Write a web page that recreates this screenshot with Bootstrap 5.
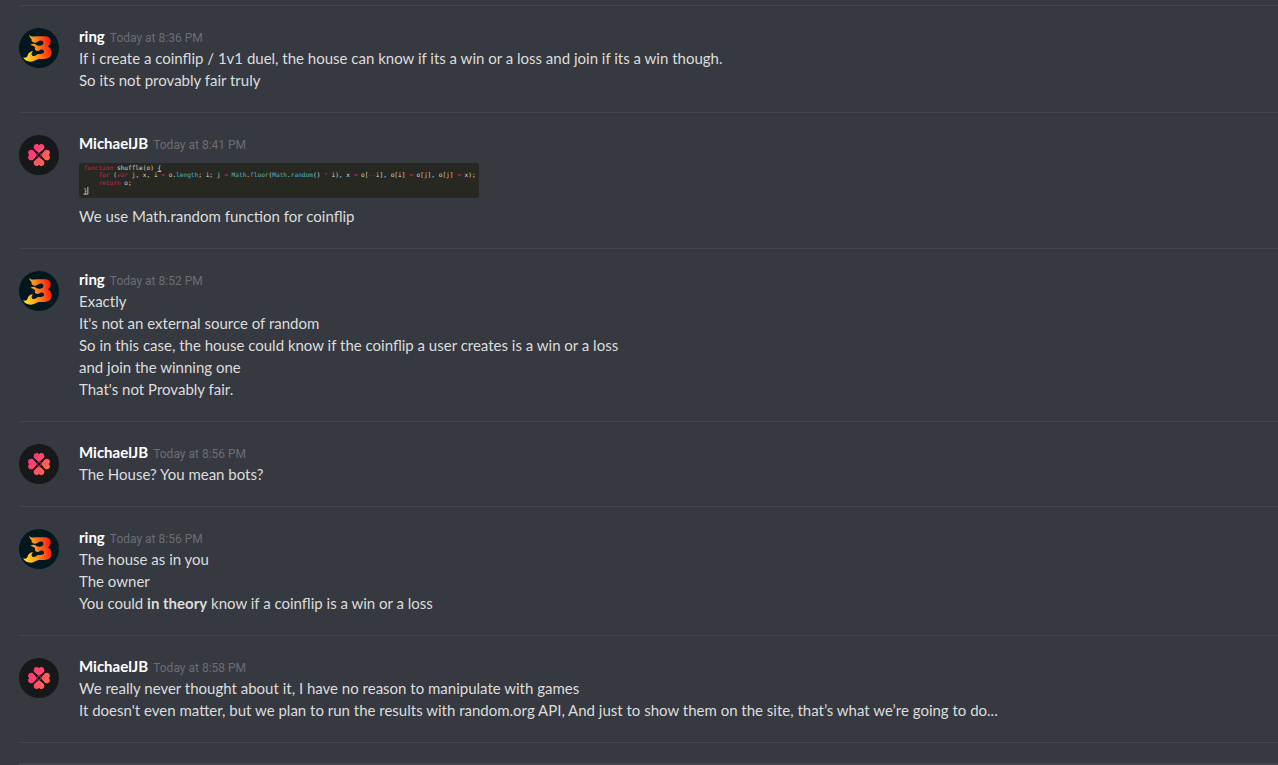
<!DOCTYPE html>
<html lang="en">
<head>
<meta charset="utf-8">
<meta name="viewport" content="width=device-width, initial-scale=1">
<title>Chat</title>
<link href="https://cdn.jsdelivr.net/npm/bootstrap@5.3.0/dist/css/bootstrap.min.css" rel="stylesheet">
<style>
  body { background: #36393f; color: #dcddde; font-family: Lato, "Open Sans", sans-serif; font-size: 15px; line-height: 22px; }
  .chat-log { padding: 5px 0 0 19px; }
  .message { padding: 19px 0 21px; gap: 20px; border-top: 1px solid #42454b; }
  .avatar { width: 40px; height: 40px; margin-top: 3px; }
  .byline { gap: 5px; }
  .author { font-size: 15px; line-height: 22px; font-weight: 700; color: #fff; }
  .stamp { font-family: Roboto, sans-serif; font-size: 12px; line-height: 16px; color: #6b6e74; }
  .attachment { width: 400px; height: 35px; margin: 9px 0 7px; border-radius: 3px; background: #272822; }
  .attachment text { font-family: "DejaVu Sans Mono", monospace; font-size: 16px; white-space: pre; fill: #d8d8c8; }
  .attachment .kw { fill: #c22a5c; }
  .attachment .fn { fill: #55b4c4; }
  .composer { margin-left: 19px; padding-top: 20px; border-top: 1px solid #42454b; }
  .composer-line { height: 2px; background: #43464c; }
</style>
</head>
<body>
<svg width="0" height="0" class="position-absolute" aria-hidden="true">
  <defs>
    <linearGradient id="fire" gradientUnits="userSpaceOnUse" x1="14" y1="70" x2="98" y2="52">
      <stop offset="0" stop-color="#ffe51f"/><stop offset=".4" stop-color="#ff9a1c"/><stop offset=".75" stop-color="#ff4a14"/><stop offset="1" stop-color="#f5180c"/>
    </linearGradient>
    <linearGradient id="petal" gradientUnits="userSpaceOnUse" x1="30" y1="45" x2="90" y2="85">
      <stop offset="0" stop-color="#ff2f83"/><stop offset="1" stop-color="#ff7245"/>
    </linearGradient>
    <symbol id="flame" viewBox="0 0 120 120">
      <circle cx="60" cy="60" r="60" fill="#03171f"/>
      <path fill="url(#fire)" d="M31 20C35 27 43 26 52 25H80C91 26 97 34 95 43C94 49 91 52 87 55C94 59 99 66 98 76C97 87 88 93 76 93H62C53 93 47 101 35 101C25 101 16 96 12 88C20 91 25 88 26 82C27 75 34 70 42 69C36 77 37 84 44 84C51 84 53 78 59 78H66C73 77 76 74 75 70C74 65 68 63 63 66C59 69 54 70 50 67C47 65 47 62 49 60C47 55 41 52 34 51C41 46 48 47 52 51C57 55 68 54 72 49C76 42 70 37 62 38C56 40 53 45 46 44C39 43 36 38 38 34C36 30 30 27 31 20Z"/>
    </symbol>
    <symbol id="clover" viewBox="0 0 120 120">
      <circle cx="60" cy="60" r="60" fill="#17181a"/>
      <g fill="url(#petal)">
        <path d="M60 54C54 49 44 45 44 37C44 27 55 24 60 31C65 24 76 27 76 37C76 45 66 49 60 54Z"/>
        <path d="M60 66C54 71 44 75 44 83C44 93 55 96 60 89C65 96 76 93 76 83C76 75 66 71 60 66Z"/>
        <path d="M54 60C49 54 45 44 37 44C27 44 24 55 31 60C24 65 27 76 37 76C45 76 49 66 54 60Z"/>
        <path d="M66 60C71 54 75 44 83 44C93 44 96 55 89 60C96 65 93 76 83 76C75 76 71 66 66 60Z"/>
      </g>
      <path d="M45 45L75 75M75 45L45 75" stroke="#17181a" stroke-width="5"/>
      <circle cx="60" cy="60" r="6" fill="#17181a" stroke="#b93858" stroke-width="2"/>
    </symbol>
  </defs>
</svg>

<main class="chat-log">
  <article class="message d-flex">
    <svg class="avatar flex-shrink-0" role="img" aria-label="ring"><use href="#flame"/></svg>
    <div>
      <div class="byline d-flex align-items-baseline"><h2 class="author mb-0">ring</h2><time class="stamp">Today at 8:36 PM</time></div>
      <div>If i create a coinflip / 1v1 duel, the house can know if its a win or a loss and join if its a win though.</div>
      <div>So its not provably fair truly</div>
    </div>
  </article>

  <article class="message d-flex">
    <svg class="avatar flex-shrink-0" role="img" aria-label="MichaelJB"><use href="#clover"/></svg>
    <div>
      <div class="byline d-flex align-items-baseline"><h2 class="author mb-0">MichaelJB</h2><time class="stamp">Today at 8:41 PM</time></div>
      <svg class="attachment d-block" viewBox="0 0 1036 91">
        <text x="10" y="18"><tspan class="kw" font-style="italic">function</tspan> shuffle(o) {</text>
        <text x="10" y="37">    <tspan class="kw">for</tspan> (<tspan class="kw" font-style="italic">var</tspan> j, x, i <tspan class="kw">=</tspan> o.<tspan class="fn">length</tspan>; i; j <tspan class="kw">=</tspan> <tspan class="fn">Math</tspan>.<tspan class="fn">floor</tspan>(<tspan class="fn">Math</tspan>.<tspan class="fn">random</tspan>() <tspan class="kw">*</tspan> i), x <tspan class="kw">=</tspan> o[<tspan class="kw">--</tspan>i], o[i] <tspan class="kw">=</tspan> o[j], o[j] <tspan class="kw">=</tspan> x);</text>
        <text x="10" y="57">    <tspan class="kw">return</tspan> o;</text>
        <text x="10" y="77">}</text>
        <path d="M21 62V81M10 81H21M202 22H212" stroke="#e8e8dc" stroke-width="2"/>
      </svg>
      <div>We use Math.random function for coinflip</div>
    </div>
  </article>

  <article class="message d-flex">
    <svg class="avatar flex-shrink-0" role="img" aria-label="ring"><use href="#flame"/></svg>
    <div>
      <div class="byline d-flex align-items-baseline"><h2 class="author mb-0">ring</h2><time class="stamp">Today at 8:52 PM</time></div>
      <div>Exactly</div>
      <div>It's not an external source of random</div>
      <div>So in this case, the house could know if the coinflip a user creates is a win or a loss</div>
      <div>and join the winning one</div>
      <div>That's not Provably fair.</div>
    </div>
  </article>

  <article class="message d-flex">
    <svg class="avatar flex-shrink-0" role="img" aria-label="MichaelJB"><use href="#clover"/></svg>
    <div>
      <div class="byline d-flex align-items-baseline"><h2 class="author mb-0">MichaelJB</h2><time class="stamp">Today at 8:56 PM</time></div>
      <div>The House? You mean bots?</div>
    </div>
  </article>

  <article class="message d-flex">
    <svg class="avatar flex-shrink-0" role="img" aria-label="ring"><use href="#flame"/></svg>
    <div>
      <div class="byline d-flex align-items-baseline"><h2 class="author mb-0">ring</h2><time class="stamp">Today at 8:56 PM</time></div>
      <div>The house as in you</div>
      <div>The owner</div>
      <div>You could <strong>in theory</strong> know if a coinflip is a win or a loss</div>
    </div>
  </article>

  <article class="message d-flex">
    <svg class="avatar flex-shrink-0" role="img" aria-label="MichaelJB"><use href="#clover"/></svg>
    <div>
      <div class="byline d-flex align-items-baseline"><h2 class="author mb-0">MichaelJB</h2><time class="stamp">Today at 8:58 PM</time></div>
      <div>We really never thought about it, I have no reason to manipulate with games</div>
      <div>It doesn't even matter, but we plan to run the results with random.org API, And just to show them on the site, that’s what we’re going to do...</div>
    </div>
  </article>
</main>
<footer class="composer"><div class="composer-line"></div></footer>
<script src="https://cdn.jsdelivr.net/npm/bootstrap@5.3.0/dist/js/bootstrap.bundle.min.js"></script>
</body>
</html>
